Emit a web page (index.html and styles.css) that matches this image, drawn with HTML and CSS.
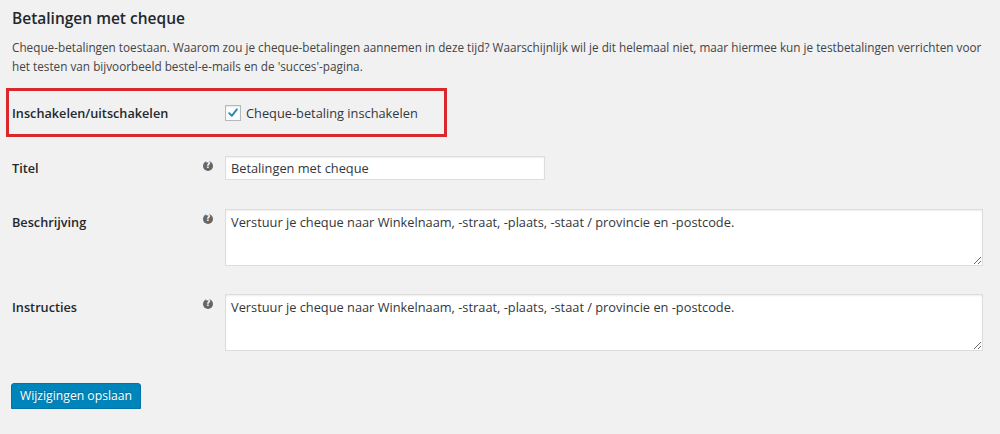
FILE: index.html
```html
<!DOCTYPE html>
<html lang="nl">
<head>
<meta charset="utf-8">
<title>Betalingen met cheque</title>
<link rel="stylesheet" href="styles.css">
</head>
<body>
<div class="wrap">
  <h2 class="title">Betalingen met cheque</h2>
  <p class="desc">Cheque-betalingen toestaan. Waarom zou je cheque-betalingen aannemen in deze tijd? Waarschijnlijk wil je dit helemaal niet, maar hiermee kun je testbetalingen verrichten voor het testen van bijvoorbeeld bestel-e-mails en de 'succes'-pagina.</p>

  <div class="row row-highlight">
    <div class="label label-wide">Inschakelen/uitschakelen</div>
    <label class="check">
      <span class="box"><svg viewBox="0 0 16 16" width="16" height="16"><path d="M3.6 8.2 L6.6 11.2 L12.4 3.8" fill="none" stroke="#1e8cbe" stroke-width="2.2" stroke-linecap="round" stroke-linejoin="round"/></svg></span>
      <span class="check-text">Cheque-betaling inschakelen</span>
    </label>
  </div>

  <div class="row row-titel">
    <div class="label">Titel</div>
    <span class="help">?</span>
    <div class="input">Betalingen met cheque</div>
  </div>

  <div class="row row-area">
    <div class="label">Beschrijving</div>
    <span class="help">?</span>
    <textarea class="area">Verstuur je cheque naar Winkelnaam, -straat, -plaats, -staat / provincie en -postcode.</textarea>
  </div>

  <div class="row row-area row-area2">
    <div class="label">Instructies</div>
    <span class="help">?</span>
    <textarea class="area">Verstuur je cheque naar Winkelnaam, -straat, -plaats, -staat / provincie en -postcode.</textarea>
  </div>

  <button class="save">Wijzigingen opslaan</button>
</div>
</body>
</html>
```

FILE: styles.css
```css
html, body {
  margin: 0;
  padding: 0;
  background: #f1f1f1;
}
body {
  font-family: "Open Sans", "Noto Sans", sans-serif;
  color: #23282d;
}
.wrap {
  padding: 0 12px;
}
.title {
  margin: 6px 0 0;
  font-size: 15.5px;
  line-height: 24px;
  font-weight: 600;
  color: #23282d;
}
.desc {
  margin: 8px -10px 0 0;
  font-size: 11.75px;
  line-height: 19px;
  color: #444;
}
.row {
  display: flex;
  align-items: flex-start;
}
.label {
  width: 191px;
  flex: none;
  font-size: 12.7px;
  font-weight: 600;
  line-height: 24px;
  color: #23282d;
}
.row-highlight {
  margin: 12px 0 0 -6px;
  width: 432px;
  height: 43px;
  border: 3px solid #d9272d;
  padding-left: 3px;
  align-items: center;
  box-sizing: content-box;
}
.label-wide {
  width: 213px;
}
.check {
  display: flex;
  align-items: center;
}
.box {
  width: 16px;
  height: 16px;
  box-sizing: border-box;
  border: 1px solid #b4b9be;
  background: #fff;
  box-shadow: inset 0 1px 2px rgba(0,0,0,.1);
  display: flex;
  align-items: center;
  justify-content: center;
}
.box svg {
  display: block;
  width: 14px;
  height: 14px;
}
.check-text {
  margin-left: 5px;
  font-size: 12.8px;
  line-height: 20px;
  color: #32373c;
}
.help {
  width: 10px;
  height: 10px;
  flex: none;
  margin-top: 5px;
  margin-right: 12px;
  border-radius: 50%;
  background: #666;
  color: #fff;
  font-size: 8px;
  font-weight: 700;
  line-height: 10px;
  text-align: center;
  font-family: "DejaVu Sans", sans-serif;
}
.row-titel {
  margin-top: 19px;
}
.input {
  width: 320px;
  height: 24px;
  box-sizing: border-box;
  border: 1px solid #ddd;
  background: #fff;
  box-shadow: inset 0 1px 2px rgba(0,0,0,.07);
  padding: 0 5px;
  font-size: 12.8px;
  line-height: 22px;
  color: #32373c;
}
.row-area {
  margin-top: 29px;
}
.row-area .label {
  padding-top: 1px;
}
.row-area2 {
  margin-top: 28px;
}
.area {
  width: 758px;
  height: 57px;
  box-sizing: border-box;
  margin: 0;
  border: 1px solid #ddd;
  background: #fff;
  box-shadow: inset 0 1px 2px rgba(0,0,0,.07);
  padding: 2px 5px;
  font-family: "Open Sans", "Noto Sans", sans-serif;
  font-size: 12.8px;
  line-height: 20px;
  color: #32373c;
  resize: both;
  outline: none;
}
.save {
  display: block;
  margin: 32px 0 0 -1px;
  width: 130px;
  height: 26px;
  padding: 0 0 1px;
  border: 1px solid #0073aa;
  border-radius: 3px;
  background: #0085ba;
  box-shadow: 0 1px 0 #006799;
  color: #fff;
  font-family: "Open Sans", "Noto Sans", sans-serif;
  font-size: 12.2px;
  line-height: 24px;
  white-space: nowrap;
  text-shadow: 0 -1px 1px #006799;
}
```
